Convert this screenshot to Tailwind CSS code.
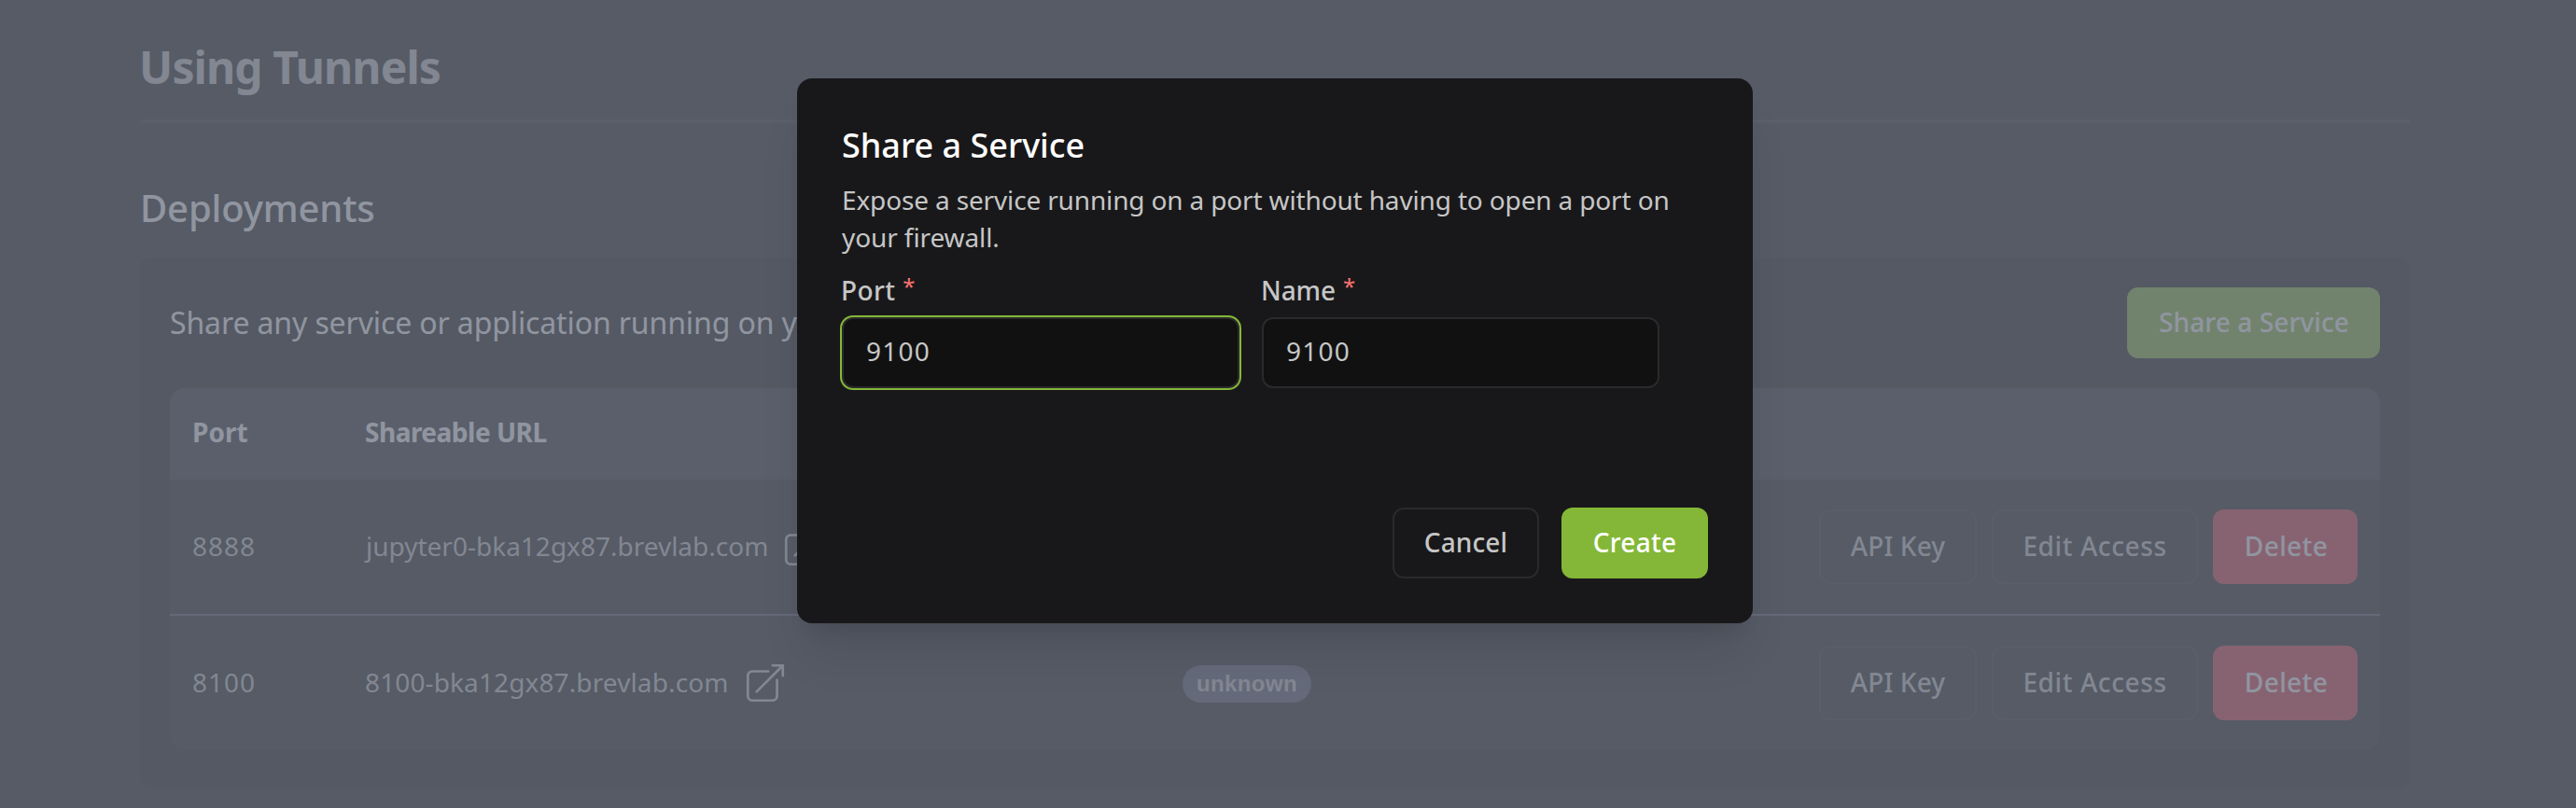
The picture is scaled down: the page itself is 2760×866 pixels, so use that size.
<!DOCTYPE html>
<html lang="en">
<head>
<meta charset="utf-8">
<title>Using Tunnels</title>
<script src="https://cdn.jsdelivr.net/npm/@tailwindcss/browser@4"></script>
</head>
<body class="relative h-[866px] overflow-hidden bg-[#18181a] font-['Noto_Sans',sans-serif] text-[28px] leading-10 text-[#c6c6c6]">

<main class="ml-[150px] w-[2432px]">
  <header class="border-b-4 border-[#28282a] pt-[44px] pb-[28px]">
    <h1 class="-ml-px text-[48px] leading-[56px] font-bold tracking-[-0.9px]">Using Tunnels</h1>
  </header>
  <h2 class="mt-[63px] mb-[25px] text-[40px] leading-[56px] font-medium tracking-[-0.15px] text-white">Deployments</h2>

  <section class="h-[568px] rounded-xl bg-[#111111] px-8 pt-8">
    <div class="flex h-[76px] items-center justify-between">
      <p class="text-[32px] tracking-[-0.12px] text-white">Share any service or application running on your instance</p>
      <button class="flex h-[76px] w-[271px] items-center justify-center rounded-xl bg-[#84b737] pb-0.5 pl-px font-medium tracking-[0.1px] text-white">Share a Service</button>
    </div>

    <div class="mt-8 overflow-hidden rounded-2xl bg-[#18181a]">
      <div class="grid h-[98px] grid-cols-[184px_877px_1fr_auto] items-center bg-[#2a2a2c] px-6 pb-1 font-bold text-white">
        <div>Port</div>
        <div class="pl-px tracking-[-0.5px]">Shareable URL</div>
      </div>

      <div class="grid h-[146px] grid-cols-[184px_877px_1fr_auto] items-center border-b-2 border-[#505064] px-6">
        <div class="pb-[3px] tracking-[1px]">8888</div>
        <div class="flex items-center gap-[13px]">
          <span class="pb-[3px] pl-[2px]">jupyter0-bka12gx87.brevlab.com</span>
          <svg class="size-[50px]" viewBox="0 0 24 24" fill="none" stroke="currentColor" stroke-width="1.3" stroke-linecap="round" stroke-linejoin="round"><path d="M13.5 6H5.25A2.25 2.25 0 0 0 3 8.25v10.5A2.25 2.25 0 0 0 5.25 21h10.5A2.25 2.25 0 0 0 18 18.75V10.5m-10.5 6L21 3m0 0h-5.25M21 3v5.25"/></svg>
        </div>
        <div></div>
        <div class="flex gap-4 font-medium">
          <button class="flex h-20 w-[169px] items-center justify-center rounded-xl border-2 border-[#262628] pb-0.5 tracking-[0.1px]">API Key</button>
          <button class="flex h-20 w-[221px] items-center justify-center rounded-xl border-2 border-[#262628] pb-0.5 tracking-[0.6px]">Edit Access</button>
          <button class="flex h-20 w-[155px] items-center justify-center rounded-xl bg-[#dc3848] pb-0.5 pl-0.5 tracking-[0.4px] text-white">Delete</button>
        </div>
      </div>

      <div class="grid h-[144px] grid-cols-[184px_877px_1fr_auto] items-center px-6">
        <div class="pb-[3px] tracking-[1px]">8100</div>
        <div class="flex items-center gap-[14px]">
          <span class="pb-[3px] pl-px tracking-[0.12px]">8100-bka12gx87.brevlab.com</span>
          <svg class="size-[50px]" viewBox="0 0 24 24" fill="none" stroke="currentColor" stroke-width="1.3" stroke-linecap="round" stroke-linejoin="round"><path d="M13.5 6H5.25A2.25 2.25 0 0 0 3 8.25v10.5A2.25 2.25 0 0 0 5.25 21h10.5A2.25 2.25 0 0 0 18 18.75V10.5m-10.5 6L21 3m0 0h-5.25M21 3v5.25"/></svg>
        </div>
        <div class="mt-0.5 flex h-10 w-[138px] items-center justify-center rounded-full bg-[#50546a] font-['Liberation_Sans',sans-serif] text-2xl font-bold tracking-[0.4px]">unknown</div>
        <div class="flex gap-4 font-medium">
          <button class="flex h-20 w-[169px] items-center justify-center rounded-xl border-2 border-[#262628] pb-0.5 tracking-[0.1px]">API Key</button>
          <button class="flex h-20 w-[221px] items-center justify-center rounded-xl border-2 border-[#262628] pb-0.5 tracking-[0.6px]">Edit Access</button>
          <button class="flex h-20 w-[155px] items-center justify-center rounded-xl bg-[#dc3848] pb-0.5 pl-0.5 tracking-[0.4px] text-white">Delete</button>
        </div>
      </div>
    </div>
  </section>
</main>

<!-- Dialog over a gray backdrop -->
<div class="absolute inset-0 bg-[#6b7280]/75">
  <div role="dialog" class="mt-[84px] ml-[854px] flex h-[584px] w-[1024px] flex-col rounded-2xl bg-[#18181a] p-12 shadow-[0_40px_50px_-10px_rgb(0_0_0/0.1),0_16px_20px_-12px_rgb(0_0_0/0.1)]">
    <h3 class="pt-0.5 text-[36px] leading-[44px] font-medium text-white">Share a Service</h3>
    <p class="mt-4 tracking-[-0.15px] whitespace-nowrap">Expose a service running on a port without having to open a port on<br><span class="tracking-[-0.1px]">your firewall.</span></p>
    <div class="mt-[17px] flex gap-6">
      <div class="w-[426px]">
        <div class="-ml-px flex font-medium tracking-[0.4px]">Port<span class="-mt-1 ml-2 text-[24px] font-normal tracking-normal text-[#f87171]">*</span></div>
        <div class="mt-[9px] flex h-[76px] items-center rounded-xl border-2 border-[#2a2a2c] bg-[#111111] pb-1 pl-6 tracking-[1.2px] ring-2 ring-[#84b737]">9100</div>
      </div>
      <div class="w-[426px]">
        <div class="-ml-px flex font-medium tracking-[-0.1px]">Name<span class="-mt-1 ml-2 text-[24px] font-normal tracking-normal text-[#f87171]">*</span></div>
        <div class="mt-[9px] flex h-[76px] items-center rounded-xl border-2 border-[#2a2a2c] bg-[#111111] pb-1 pl-6 tracking-[1.2px]">9100</div>
      </div>
    </div>
    <div class="mt-auto flex justify-end gap-6 font-medium">
      <button class="flex h-[76px] w-[157px] items-center justify-center rounded-xl border-2 border-[#2a2a2c] pb-0.5 tracking-[0.1px]">Cancel</button>
      <button class="flex h-[76px] w-[157px] items-center justify-center rounded-xl bg-[#84b737] pb-0.5 tracking-[0.3px] text-white">Create</button>
    </div>
  </div>
</div>
</body>
</html>
